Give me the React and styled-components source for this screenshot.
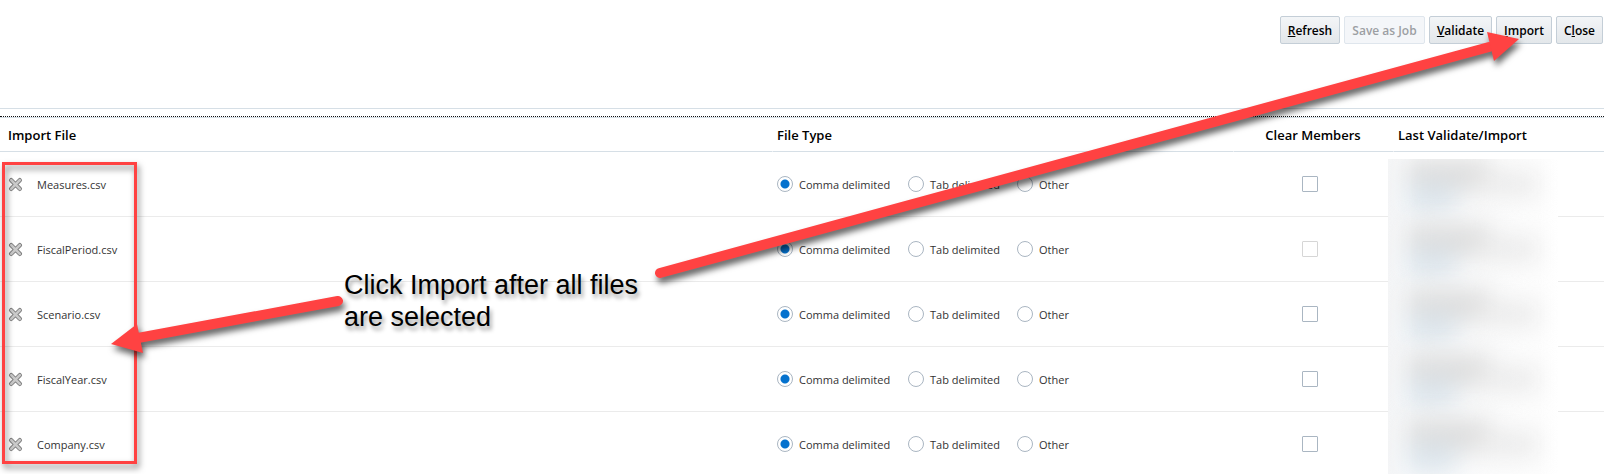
import React from "react";
import styled, { createGlobalStyle } from "styled-components";

const GlobalStyle = createGlobalStyle`
  *, *::before, *::after { box-sizing: border-box; }
  body {
    margin: 0;
    overflow: hidden;
    background: #fff;
    color: #333;
    font: 11px/16px "Open Sans", "Noto Sans", sans-serif;
  }
`;

const Page = styled.main`
  position: relative;
  height: 100vh;
  overflow: hidden;
`;

const Toolbar = styled.header`
  display: flex;
  justify-content: flex-end;
  align-items: flex-start;
  gap: 4px;
  height: 108px;
  padding: 16px 9px 0;
`;

const ToolButton = styled.button`
  width: ${(p) => p.$width}px;
  height: 28px;
  padding: 2px 0 0;
  border: 1px solid #c4ced7;
  border-radius: 2px;
  background: linear-gradient(#f3f5f7, #e3e7ea);
  color: #000;
  font: 600 12px/16px "Open Sans", "Noto Sans", sans-serif;
  white-space: nowrap;

  &:disabled {
    border-color: #dfe6ed;
    background: #f4f6f9;
    color: #9c9fa3;
  }
`;

const ListPanel = styled.section`
  margin-right: 8px;
  padding-top: 7px;
  border-top: 1px solid #d6dfe6;
`;

const FocusLine = styled.div`
  border-top: 1px dotted #111;
  border-bottom: 1px solid #d6dfe6;
`;

const TableWrap = styled.div`
  position: relative;
`;

const Table = styled.table`
  width: 100%;
  border-collapse: separate;
  border-spacing: 0;
  table-layout: fixed;
`;

const Col = styled.col`
  width: ${(p) => p.$width};
`;

const HeadCell = styled.th`
  height: 34px;
  padding: 0 5px 0 ${(p) => p.$left || 4}px;
  border-bottom: 1px solid #d6dfe6;
  color: #000;
  font-size: 13px;
  font-weight: 600;
  line-height: 16px;
  text-align: ${(p) => p.$align || "left"};
  white-space: nowrap;

  & + & {
    border-left: 1px solid #fff;
  }
`;

const Cell = styled.td`
  height: 65px;
  padding: 0 ${(p) => p.$right || 5}px 0 5px;
  border-bottom: 1px solid #ebebeb;
  vertical-align: middle;
`;

const FileEntry = styled.div`
  display: flex;
  align-items: center;
  gap: 14px;
  padding-left: 3px;
`;

const RemoveButton = styled.button`
  display: flex;
  padding: 0;
  border: 0;
  background: none;
`;

const Caption = styled.span`
  padding-top: 1px;
`;

const Choices = styled.div`
  display: grid;
  grid-template-columns: 131px 109px auto;
`;

const Choice = styled.label`
  display: flex;
  align-items: center;
  gap: 6px;
  white-space: nowrap;
`;

const Radio = styled.input`
  appearance: none;
  flex: none;
  width: 16px;
  height: 16px;
  margin: 0;
  border: 1px solid #aab6c2;
  border-radius: 50%;
  background: #fff;

  &:checked {
    background: radial-gradient(circle, #0572ce 0 4px, #fff 5px);
  }
`;

const Checkbox = styled.input`
  appearance: none;
  display: block;
  width: 16px;
  height: 16px;
  margin: 0 auto;
  border: 1px solid #aab6c2;
  border-radius: 1px;
  background: #fff;

  &:disabled {
    border-color: #d6d6d6;
  }
`;

const HiddenResults = styled.div`
  position: absolute;
  top: 41px;
  right: 46px;
  bottom: 0;
  width: 170px;
  overflow: hidden;
  background: linear-gradient(90deg, #f5f6f7, #fafbfc 20px, #fdfdfd 150px, #fff);
`;

const Smudge = styled.div`
  position: relative;
  height: 65px;
  filter: blur(12px);

  span {
    position: absolute;
  }
  span:nth-child(1) {
    left: 18px;
    top: 0;
    width: 86px;
    height: 34px;
    background: #dcdcdc;
  }
  span:nth-child(2) {
    left: 88px;
    top: 12px;
    width: 62px;
    height: 26px;
    background: #ebebeb;
  }
  span:nth-child(3) {
    left: 18px;
    top: 24px;
    width: 50px;
    height: 30px;
    background: #dce5ec;
  }
`;

const Highlight = styled.div`
  position: absolute;
  left: 2px;
  top: 162px;
  width: 135px;
  height: 302px;
  border: 3px solid #ff4242;
  filter: drop-shadow(2px 4px 3px rgba(0, 0, 0, 0.5));
  pointer-events: none;
`;

const Callout = styled.p`
  position: absolute;
  left: 344px;
  top: 269px;
  width: 310px;
  margin: 0;
  color: #000;
  font: 27px/32px "Liberation Sans", Arial, sans-serif;
  text-shadow: 2px 4px 4px rgba(0, 0, 0, 0.4);
  pointer-events: none;
`;

const Arrows = styled.svg`
  position: absolute;
  left: 0;
  top: 0;
  overflow: visible;
  filter: drop-shadow(2px 5px 3px rgba(0, 0, 0, 0.6));
  pointer-events: none;
`;

const RemoveIcon = () => (
  <svg width="15" height="15" viewBox="0 0 15 15" fill="none" strokeLinecap="round" aria-hidden="true">
    <path d="M3.2 3.2l8.6 8.6M11.8 3.2l-8.6 8.6" stroke="#7d7d7d" strokeWidth="4.4" />
    <path d="M3.2 3.2l8.6 8.6M11.8 3.2l-8.6 8.6" stroke="#cacaca" strokeWidth="2.6" />
  </svg>
);

const actions = [
  { before: "", key: "R", after: "efresh", width: 60 },
  { before: "Save as Job", key: "", after: "", width: 81, disabled: true },
  { before: "", key: "V", after: "alidate", width: 63 },
  { before: "", key: "I", after: "mport", width: 56 },
  { before: "C", key: "l", after: "ose", width: 47 },
];

const files = [
  { name: "Measures.csv" },
  { name: "FiscalPeriod.csv", locked: true },
  { name: "Scenario.csv" },
  { name: "FiscalYear.csv" },
  { name: "Company.csv" },
];

const fileTypes = ["Comma delimited", "Tab delimited", "Other"];

function FileRow({ file }) {
  return (
    <tr>
      <Cell>
        <FileEntry>
          <RemoveButton type="button" aria-label={`Remove ${file.name}`}>
            <RemoveIcon />
          </RemoveButton>
          <Caption>{file.name}</Caption>
        </FileEntry>
      </Cell>
      <Cell>
        <Choices>
          {fileTypes.map((type, i) => (
            <Choice key={type}>
              <Radio type="radio" name={file.name} defaultChecked={i === 0} />
              <Caption>{type}</Caption>
            </Choice>
          ))}
        </Choices>
      </Cell>
      <Cell $right={11}>
        <Checkbox type="checkbox" disabled={file.locked} aria-label={`Clear members for ${file.name}`} />
      </Cell>
      <Cell />
    </tr>
  );
}

export default function App() {
  return (
    <Page>
      <GlobalStyle />
      <Toolbar>
        {actions.map((a) => (
          <ToolButton key={a.before + a.key + a.after} type="button" $width={a.width} disabled={a.disabled}>
            {a.before}
            {a.key && <u>{a.key}</u>}
            {a.after}
          </ToolButton>
        ))}
      </Toolbar>
      <ListPanel>
        <FocusLine />
        <TableWrap>
          <Table>
            <colgroup>
              <Col $width="auto" />
              <Col $width="461px" />
              <Col $width="160px" />
              <Col $width="211px" />
            </colgroup>
            <thead>
              <tr>
                <HeadCell $left={8}>Import File</HeadCell>
                <HeadCell>File Type</HeadCell>
                <HeadCell $align="center">Clear Members</HeadCell>
                <HeadCell>Last Validate/Import</HeadCell>
              </tr>
            </thead>
            <tbody>
              {files.map((file) => (
                <FileRow key={file.name} file={file} />
              ))}
            </tbody>
          </Table>
          <HiddenResults aria-hidden="true">
            {files.map((file) => (
              <Smudge key={file.name}>
                <span />
                <span />
                <span />
              </Smudge>
            ))}
          </HiddenResults>
        </TableWrap>
      </ListPanel>
      <Highlight />
      <Arrows width="1612" height="474" viewBox="0 0 1612 474" fill="#ff4242" stroke="#ff4242" aria-hidden="true">
        <path d="M338 301L138 338" strokeWidth="10" strokeLinecap="round" />
        <path d="M111 344L137 324L143 353Z" stroke="none" />
        <path d="M660 273L1489 47" strokeWidth="10" strokeLinecap="round" />
        <path d="M1519 39L1487 32L1494 61Z" stroke="none" />
      </Arrows>
      <Callout>
        Click Import after all files
        <br />
        are selected
      </Callout>
    </Page>
  );
}
